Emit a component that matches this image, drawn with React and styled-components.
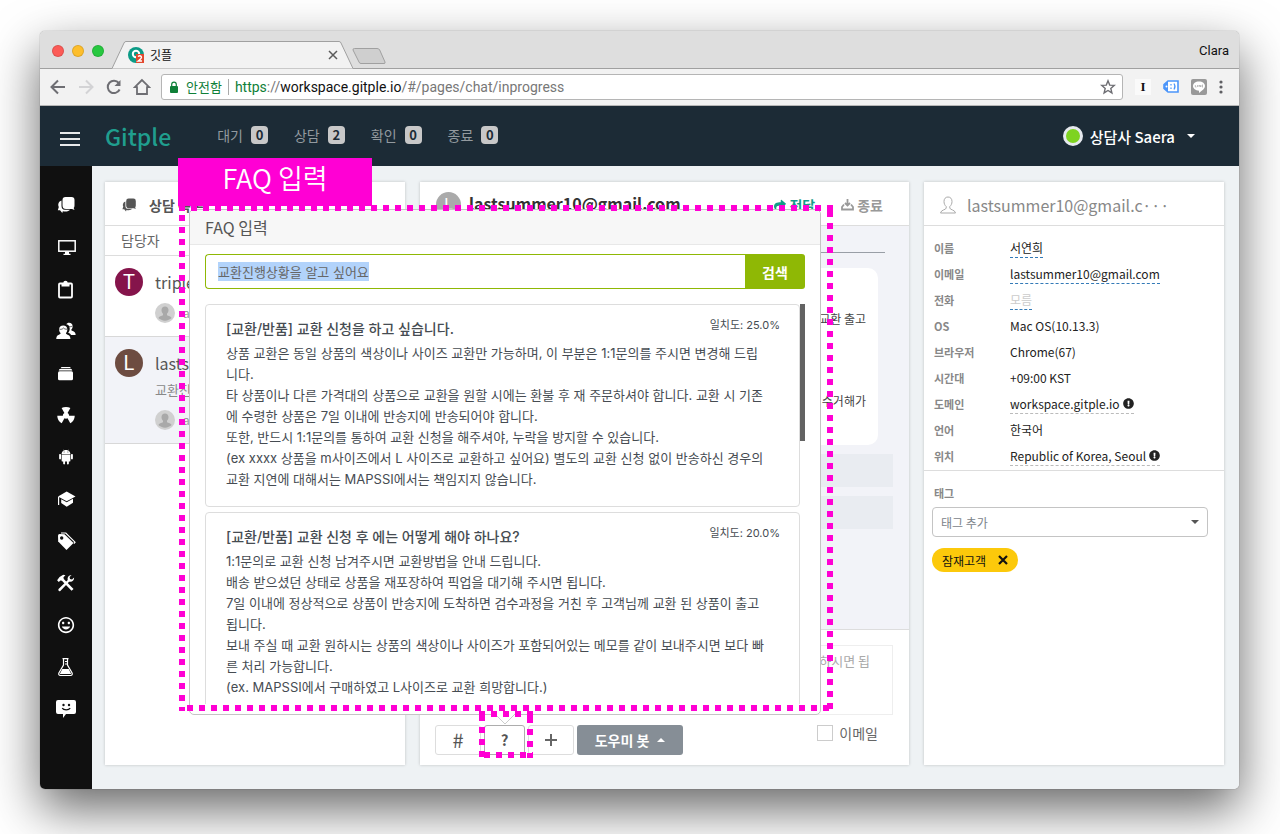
import React, { useEffect, useRef } from 'react';
import styled, { createGlobalStyle } from 'styled-components';
import { IoMdNuclear, IoLogoAndroid, IoMdHappy } from 'react-icons/io';
import { FaExclamationCircle, FaShare } from 'react-icons/fa';

const sidebarItems = [
  { name: '채팅', icon: <ChatIcon /> },
  { name: '모니터', icon: <DesktopIcon /> },
  { name: '기록', icon: <ClipboardIcon /> },
  { name: '고객', icon: <PeopleIcon /> },
  { name: '보관함', icon: <StackIcon /> },
  { name: '캠페인', icon: <IoMdNuclear /> },
  { name: '봇', icon: <IoLogoAndroid /> },
  { name: '학습', icon: <SchoolIcon /> },
  { name: '태그', icon: <TagIcon /> },
  { name: '설정', icon: <ToolsIcon /> },
  { name: '만족도', icon: <IoMdHappy /> },
  { name: '실험실', icon: <FlaskIcon /> },
  { name: '도움말', icon: <SmileChatIcon /> },
];

const statusTabs = [
  { label: '대기', count: 0 },
  { label: '상담', count: 2 },
  { label: '확인', count: 0 },
  { label: '종료', count: 0 },
];

const profile = [
  { label: '이름', value: '서연희', line: '#337ab7' },
  { label: '이메일', value: 'lastsummer10@gmail.com', line: '#337ab7' },
  { label: '전화', value: '모름', line: '#337ab7', empty: true },
  { label: 'OS', value: 'Mac OS(10.13.3)' },
  { label: '브라우저', value: 'Chrome(67)' },
  { label: '시간대', value: '+09:00 KST' },
  { label: '도메인', value: 'workspace.gitple.io', line: '#bbb', info: true },
  { label: '언어', value: '한국어' },
  { label: '위치', value: 'Republic of Korea, Seoul', line: '#bbb', info: true },
];

const faqs = [
  {
    title: '[교환/반품] 교환 신청을 하고 싶습니다.',
    score: '25.0%',
    body: `상품 교환은 동일 상품의 색상이나 사이즈 교환만 가능하며, 이 부분은 1:1문의를 주시면 변경해 드립
니다.
타 상품이나 다른 가격대의 상품으로 교환을 원할 시에는 환불 후 재 주문하셔야 합니다. 교환 시 기존
에 수령한 상품은 7일 이내에 반송지에 반송되어야 합니다.
또한, 반드시 1:1문의를 통하여 교환 신청을 해주셔야, 누락을 방지할 수 있습니다.
(ex xxxx 상품을 m사이즈에서 L 사이즈로 교환하고 싶어요) 별도의 교환 신청 없이 반송하신 경우의
교환 지연에 대해서는 MAPSSI에서는 책임지지 않습니다.`,
  },
  {
    title: '[교환/반품] 교환 신청 후 에는 어떻게 해야 하나요?',
    score: '20.0%',
    body: `1:1문의로 교환 신청 남겨주시면 교환방법을 안내 드립니다.
배송 받으셨던 상태로 상품을 재포장하여 픽업을 대기해 주시면 됩니다.
7일 이내에 정상적으로 상품이 반송지에 도착하면 검수과정을 거친 후 고객님께 교환 된 상품이 출고
됩니다.
보내 주실 때 교환 원하시는 상품의 색상이나 사이즈가 포함되어있는 메모를 같이 보내주시면 보다 빠
른 처리 가능합니다.
(ex. MAPSSI에서 구매하였고 L사이즈로 교환 희망합니다.)`,
  },
];

function ChatIcon() {
  return (
    <svg viewBox="0 0 20 20" fill="currentColor">
      <path d="M9.500 2h6q3 0 3 3v5.500q0 1.500-.8 2.500l.8 2-2.500-1H10q-3.500 0-3.500-3.500V5q0-3 3-3z" />
      <path d="M5.500 5.500C2.500 6.500 1.600 9.500 2.800 12L1.800 15.300H4L6.300 18l.5-1.800c3 .8 6 .3 7.200-1.400H9C6.300 14.800 5.500 13 5.500 10.500z" />
    </svg>
  );
}

function DesktopIcon() {
  return (
    <svg viewBox="0 0 20 20" fill="currentColor">
      <rect x="2.800" y="3.800" width="16.400" height="10.400" fill="none" stroke="currentColor" strokeWidth="1.500" />
      <path d="M9 14.500h4v2.300h1.500V18h-7v-1.200H9z" />
    </svg>
  );
}

function ClipboardIcon() {
  return (
    <svg viewBox="0 0 20 20" fill="currentColor">
      <rect x="3" y="4.500" width="13" height="14" rx="1" fill="none" stroke="currentColor" strokeWidth="1.800" />
      <path d="M5.500 4H7.300a2.200 2.200 0 0 1 4.400 0h1.800v3.500h-8z" />
    </svg>
  );
}

function PeopleIcon() {
  return (
    <svg viewBox="0 0 18 18" fill="currentColor">
      <path d="M11.800 1.600c1.900 0 3.200 1.300 3.200 3.200 0 1.200-.5 2.400-1.300 3 .1.600.5.900 1.300 1.200 1.500.5 2.500 1.200 2.700 3.500h-4.200c-.6-1-1.500-1.500-2.600-1.900 1.400-1.300 1.800-3.600 1.100-5.400C11.500 4 10.500 3.300 9.200 3c.5-.9 1.400-1.400 2.600-1.400z" />
      <path d="M6.500 4.100c2.200 0 3.700 1.400 3.700 3.500 0 1.300-.5 2.500-1.300 3.200.1.800.5 1.100 1.500 1.500 1.700.6 2.400 1.300 2.600 3.900H.2c.2-2.600.9-3.300 2.500-3.900 1-.4 1.400-.7 1.500-1.500-.9-.7-1.400-1.900-1.400-3.200 0-2.100 1.500-3.500 3.700-3.500z" />
      <path d="M3.200 7.400c1.500.3 2.700-.1 3.600-1.100.8.9 1.900 1.200 3.200 1M11.500 4.800c1 .5 2 .4 3.300-.2" fill="none" stroke="#101010" strokeWidth=".6" />
    </svg>
  );
}

function StackIcon() {
  return (
    <svg viewBox="0 0 20 20" fill="currentColor">
      <path d="M5.500 4h8.500l1 1.200H4.500zM3.500 6h12l.8 1.500H2.700z" />
      <rect x="2" y="8.200" width="15" height="9" rx="1.500" />
    </svg>
  );
}

function SchoolIcon() {
  return (
    <svg viewBox="0 0 20 20" fill="currentColor">
      <path d="M10.700 2.500 19.500 7.500 10.700 12.200 2 7.500z" />
      <path d="M5.200 10.200 10.700 13.200 17 9.800v4L10.700 17.800 5.200 14z" />
      <path d="M2 8h1.200v8H2z" />
    </svg>
  );
}

function TagIcon() {
  return (
    <svg viewBox="0 0 20 20" fill="currentColor">
      <path d="M2 4.500Q2 3 3.500 3L8.500 3.200 17.500 12 10.500 19 2.200 10.500z" />
      <path d="M5 2H9.800L19 11.200 17.800 12.500" fill="none" stroke="currentColor" strokeWidth="1.200" />
      <circle cx="5.700" cy="7" r="1.700" fill="#101010" />
    </svg>
  );
}

function ToolsIcon() {
  return (
    <svg viewBox="0 0 18 18" fill="currentColor">
      <path d="M1 6.500 3.200 3.500 6.500 1.500 8.500 2 6.700 3.800 7 5.300 15.800 14.300 14 16 5.300 7 4 6.700 2.500 8.200z" />
      <path d="m2.300 14.500 8.300-8.300c-.5-2.400.8-4.400 3.400-4.500l-1.800 2 .4 1.800 1.800.4 1.900-1.800c.2 2.700-1.900 4.300-4.500 3.700L3.900 16.200c-1 .7-2.300-.6-1.600-1.700z" />
    </svg>
  );
}

function FlaskIcon() {
  return (
    <svg viewBox="0 0 20 20" fill="currentColor">
      <path d="M7.500 2v6L2.900 16q-.8 2.300 1.600 2.500h10q2.400-.2 1.600-2.500L11.500 8V2M6.500 1.700h6" fill="none" stroke="currentColor" strokeWidth="1.200" />
      <path d="M6.300 12h6.400l2.500 5H3.800zM9 4h2v1H9zM9 6.500h2v1H9z" />
    </svg>
  );
}

function SmileChatIcon() {
  return (
    <svg viewBox="0 0 20 20" fill="currentColor">
      <path d="M2 1h16a2 2 0 0 1 2 2v10a2 2 0 0 1-2 2h-8l-3 4v-4H2a2 2 0 0 1-2-2V3a2 2 0 0 1 2-2z" />
      <circle cx="7.500" cy="6" r="1.200" fill="#101010" />
      <circle cx="13" cy="6" r="1.200" fill="#101010" />
      <path d="M6.200 9.200c1.500 2.300 6.500 2.300 8 0" fill="none" stroke="#101010" strokeWidth="1.200" />
    </svg>
  );
}

function PersonIcon() {
  return (
    <svg width="20" height="20" viewBox="0 0 20 20" fill="#d0d0d0">
      <circle cx="10" cy="10" r="10" />
      <path
        d="M10 3.500c2.200 0 3.500 1.500 3.500 3.600 0 1.700-.7 2.900-1.500 3.700v1.500c1.600.7 4 1 4.600 2.800-1.600 1.500-4 2.600-6.600 2.600s-5-1.100-6.600-2.600c.6-1.800 3-2.100 4.600-2.800v-1.500c-.8-.8-1.500-2-1.500-3.700C6.500 5 7.800 3.500 10 3.500z"
        fill="#a9a9a9"
      />
    </svg>
  );
}

function App() {
  const search = useRef(null);

  useEffect(() => {
    search.current.focus();
    search.current.select();
  }, []);

  return (
    <>
      <GlobalStyle />
      <Stage>
        <Window>
          <TabStrip>
            <Light color="#fc5b57" />
            <Light color="#fdbe2c" />
            <Light color="#27c840" />
            <Tab>
              <TabShape viewBox="0 0 242 28">
                <path d="M0 27.500 12 2Q12.600.5 14 .5H227Q228.500.5 229 2L241 27.500" fill="#f2f2f2" stroke="#a0a0a0" />
              </TabShape>
              <svg width="16" height="16" viewBox="0 0 16 16">
                <circle cx="8" cy="8" r="8" fill="#0c9b86" />
                <circle cx="8" cy="7" r="3.200" fill="none" stroke="#fff" strokeWidth="2" />
                <rect x="8" y="7" width="8" height="9" fill="#e2492f" />
                <path d="M10 9.500q2-1.500 3.200 0t-3 4.500h3.800" fill="none" stroke="#fff" strokeWidth="1.400" />
              </svg>
              <TabTitle>깃플</TabTitle>
              <svg width="10" height="10" viewBox="0 0 10 10" stroke="#5a5a5a" strokeWidth="1.500">
                <path d="m1 1 8 8M9 1 1 9" />
              </svg>
            </Tab>
            <NewTab viewBox="0 0 34 17">
              <path d="M2.500.5H25Q27 .5 27.700 2L33 14Q33.500 15.500 32 15.500H9Q7.500 15.500 7 14L1 2Q.7.5 2.500.5z" fill="#cfcfcf" stroke="#a0a0a0" />
            </NewTab>
            <ChromeUser>Clara</ChromeUser>
          </TabStrip>
          <Toolbar>
            <ChromeButton aria-label="뒤로">
              <svg width="16" height="16" viewBox="0 0 16 16" fill="none" stroke="#6e6e73" strokeWidth="2">
                <path d="M15 8H2M8 1.500 1.500 8 8 14.500" />
              </svg>
            </ChromeButton>
            <ChromeButton aria-label="앞으로">
              <svg width="16" height="16" viewBox="0 0 16 16" fill="none" stroke="#d3d3d5" strokeWidth="2">
                <path d="M1 8h13M8 1.500 14.500 8 8 14.500" />
              </svg>
            </ChromeButton>
            <ChromeButton aria-label="새로고침">
              <svg width="16" height="16" viewBox="0 0 16 16" fill="none" stroke="#6e6e73" strokeWidth="2">
                <path d="M13.600 10.500A6.200 6.200 0 1 1 12.800 4" />
                <path d="M14.500 1v6h-6z" fill="#6e6e73" stroke="none" />
              </svg>
            </ChromeButton>
            <ChromeButton aria-label="홈">
              <svg width="18" height="18" viewBox="0 0 18 18" fill="none" stroke="#6e6e73" strokeWidth="1.800">
                <path d="M9 2 1.800 9.200H4V16h10V9.200h2.200z" />
              </svg>
            </ChromeButton>
            <UrlBox>
              <svg width="8" height="12" viewBox="0 0 8 12" fill="#0f8038">
                <rect y="5" width="8" height="7" rx="1" />
                <path d="M1.700 5V3.500a2.300 2.300 0 0 1 4.600 0V5" fill="none" stroke="#0f8038" strokeWidth="1.200" />
              </svg>
              <Secure>안전함</Secure>
              <Url>
                <Green>https</Green>://<Black>workspace.gitple.io</Black>/#/pages/chat/inprogress
              </Url>
              <svg width="16" height="16" viewBox="0 0 16 16" fill="none" stroke="#6e6e73" strokeWidth="1.400">
                <path d="m8 1.800 1.700 4.300 4.600.3-3.500 3 1.100 4.500L8 11.500l-3.900 2.400 1.100-4.500-3.500-3 4.600-.3z" />
              </svg>
            </UrlBox>
            <Extensions>
              <ExtLetter>I</ExtLetter>
              <svg width="16" height="14" viewBox="0 0 16 14">
                <path d="M5 1h10v11H5L1 8.500v-4z" fill="#fff" stroke="#4b95fa" strokeWidth="1.600" />
                <path d="M1 4.500 5 1v11L1 8.500z" fill="#4b95fa" />
                <path d="M8 4v1.500M8 7.500V9M11 3.500q2 3 0 6" fill="none" stroke="#4b95fa" strokeWidth="1.200" />
                <circle cx="3.500" cy="6.500" r="1" fill="#fff" />
              </svg>
              <svg width="16" height="16" viewBox="0 0 16 16">
                <rect width="16" height="16" rx="2" fill="#999" />
                <path d="M8 2.500c3.500 0 6 2 6 4.600 0 2.300-2.500 4.400-6 6.900v-2.300c-3.500 0-6-2-6-4.600s2.500-4.600 6-4.600z" fill="#fff" />
                <path d="M4.300 6v2h1.200M6.500 6v2M8 8V6l1.500 2V6M12 6h-1v2h1M11 7h1" fill="none" stroke="#999" strokeWidth=".6" />
              </svg>
              <svg width="4" height="14" viewBox="0 0 4 14" fill="#5f5f63">
                <circle cx="2" cy="2" r="1.600" />
                <circle cx="2" cy="7" r="1.600" />
                <circle cx="2" cy="12" r="1.600" />
              </svg>
            </Extensions>
          </Toolbar>

          <AppHeader>
            <MenuButton aria-label="메뉴">
              <svg width="20" height="16" viewBox="0 0 20 16" stroke="#e8eaeb" strokeWidth="2">
                <path d="M0 2h20M0 8h20M0 14h20" />
              </svg>
            </MenuButton>
            <Brand href="#/">Gitple</Brand>
            <StatusNav>
              {statusTabs.map((tab) => (
                <StatusLink href="#/pages/chat" key={tab.label}>
                  {tab.label}
                  <Count>{tab.count}</Count>
                </StatusLink>
              ))}
            </StatusNav>
            <UserMenu>
              <Online />
              상담사 Saera
              <Caret />
            </UserMenu>
          </AppHeader>

          <Body>
            <Sidebar>
              {sidebarItems.map((item) => (
                <SideLink href="#/pages" aria-label={item.name} key={item.name}>
                  {item.icon}
                </SideLink>
              ))}
            </Sidebar>

            <Content>
              <Panel>
                <PanelHeader>
                  <ListTitle>
                    <ChatIcon />
                    상담 목록
                  </ListTitle>
                </PanelHeader>
                <ListFilter>담당자</ListFilter>
                <Chat>
                  <Avatar color="#85144b">T</Avatar>
                  <ChatInfo>
                    <ChatName>triple</ChatName>
                    <Agent>
                      <PersonIcon />
                      ag
                    </Agent>
                  </ChatInfo>
                </Chat>
                <Chat $active>
                  <Avatar color="#6d4c41">L</Avatar>
                  <ChatInfo>
                    <ChatName>lastsu</ChatName>
                    <ChatText>교환진</ChatText>
                    <Agent>
                      <PersonIcon />
                      ag
                    </Agent>
                  </ChatInfo>
                </Chat>
              </Panel>

              <Panel>
                <PanelHeader>
                  <RoomAvatar>L</RoomAvatar>
                  <RoomTitle>lastsummer10@gmail.com</RoomTitle>
                  <RoomAction $accent>
                    <FaShare size={12} />
                    전달
                  </RoomAction>
                  <RoomAction>
                    <svg width="13" height="13" viewBox="0 0 13 13" fill="none" stroke="currentColor" strokeWidth="1.800">
                      <path d="M3 6.500 1 9v2.500h11V9l-2-2.500M6.500 1v6M4 5l2.500 2.500L9 5" />
                    </svg>
                    종료
                  </RoomAction>
                </PanelHeader>
                <Messages>
                  <Divider />
                  <Bubble>
                    <p>교환 출고</p>
                    <p>수거해가</p>
                  </Bubble>
                  <SystemRow />
                  <SystemRow />
                </Messages>
                <Composer>
                  <MessageBox aria-label="메시지" placeholder="하시면 됩" />
                  <Actions>
                    <ToolButton $wide>#</ToolButton>
                    <ToolButton $active>?</ToolButton>
                    <ToolButton $wide aria-label="추가">
                      <svg width="12" height="12" viewBox="0 0 12 12" stroke="#666" strokeWidth="2">
                        <path d="M6 0v12M0 6h12" />
                      </svg>
                    </ToolButton>
                    <BotButton>
                      도우미 봇
                      <Caret $up />
                    </BotButton>
                    <EmailCheck>
                      <input type="checkbox" />
                      이메일
                    </EmailCheck>
                  </Actions>
                </Composer>
              </Panel>

              <Panel>
                <PanelHeader>
                  <ProfileTitle>
                    <svg width="16" height="18" viewBox="0 0 16 18" fill="none" stroke="#aaa">
                      <path d="M8 1c2.500 0 4 1.800 4 4.500 0 2.200-.9 4-2.200 5v1.500c0 2 5.200 1.500 5.700 5H.5c.5-3.500 5.700-3 5.700-5v-1.500C4.900 9.500 4 7.700 4 5.500 4 2.800 5.500 1 8 1z" />
                    </svg>
                    lastsummer10@gmail.c···
                  </ProfileTitle>
                </PanelHeader>
                <Profile>
                  {profile.map((row) => (
                    <ProfileRow key={row.label}>
                      <dt>{row.label}</dt>
                      <dd>
                        <Value $line={row.line} $empty={row.empty}>
                          {row.value}
                          {row.info && <FaExclamationCircle size={11} />}
                        </Value>
                      </dd>
                    </ProfileRow>
                  ))}
                </Profile>
                <Tags>
                  <label htmlFor="tag">태그</label>
                  <SelectBox>
                    <select id="tag">
                      <option>태그 추가</option>
                    </select>
                    <Caret />
                  </SelectBox>
                  <Tag>
                    잠재고객
                    <button aria-label="태그 삭제">
                      <svg width="10" height="10" viewBox="0 0 10 10" stroke="#111" strokeWidth="2.200">
                        <path d="m1 1 8 8M9 1 1 9" />
                      </svg>
                    </button>
                  </Tag>
                </Tags>
              </Panel>
            </Content>

            <Popover>
              <PopoverTitle>FAQ 입력</PopoverTitle>
              <SearchRow>
                <SearchInput ref={search} aria-label="FAQ 검색" defaultValue="교환진행상황을 알고 싶어요" />
                <SearchButton>검색</SearchButton>
              </SearchRow>
              <Results>
                <ResultList>
                  {faqs.map((faq) => (
                    <Faq key={faq.title}>
                      <FaqHead>
                        <h3>{faq.title}</h3>
                        <span>일치도: {faq.score}</span>
                      </FaqHead>
                      <p>{faq.body}</p>
                    </Faq>
                  ))}
                </ResultList>
                <Scrollbar />
              </Results>
              <Arrow viewBox="0 0 20 11">
                <path d="M0 0 10 10 20 0" fill="#fff" stroke="#ccc" />
              </Arrow>
            </Popover>
            <PopoverMark />
            <ButtonMark />
            <MarkLabel>FAQ 입력</MarkLabel>
          </Body>
        </Window>
      </Stage>
    </>
  );
}

export default App;

// Styled Components
const GlobalStyle = createGlobalStyle`
  * {
    box-sizing: border-box;
  }

  body {
    margin: 0;
    background-color: #fff;
    font-family: 'Noto Sans CJK KR', sans-serif;
    color: #333;
  }

  button, input, select, textarea {
    font-family: inherit;
  }

  p, h2, h3, dl, dd {
    margin: 0;
  }

  a {
    text-decoration: none;
  }
`;

const Stage = styled.div`
  display: flex;
  min-height: 100vh;
  padding: 31px 41px 45px 40px;
  overflow: hidden;
`;

const Window = styled.div`
  flex: 1;
  display: flex;
  flex-direction: column;
  min-width: 0;
  border-radius: 5px;
  box-shadow: 0 0 1px rgba(0, 0, 0, 0.6), 0 20px 50px rgba(0, 0, 0, 0.6);
`;

const TabStrip = styled.div`
  display: flex;
  align-items: center;
  gap: 8px;
  height: 38px;
  padding: 2px 10px 0 12px;
  background-color: #dedede;
  border-bottom: 1px solid #a0a0a0;
  border-radius: 5px 5px 0 0;
`;

const Light = styled.span`
  width: 12px;
  height: 12px;
  border-radius: 50%;
  border: 1px solid rgba(0, 0, 0, 0.12);
  background-color: ${(props) => props.color};
`;

const Tab = styled.div`
  position: relative;
  display: flex;
  align-items: center;
  align-self: flex-end;
  gap: 6px;
  width: 242px;
  height: 28px;
  padding: 0 16px;
  margin: 0 -10px -1px 0;
`;

const TabShape = styled.svg`
  position: absolute;
  inset: 0;
  z-index: 0;
  & ~ * {
    position: relative;
  }
`;

const TabTitle = styled.span`
  flex: 1;
  font-size: 12px;
  line-height: 16px;
  color: #111;
`;

const NewTab = styled.svg`
  width: 34px;
  height: 17px;
  margin-top: 11px;
`;

const ChromeUser = styled.span`
  margin-left: auto;
  font: 13px Roboto, sans-serif;
  color: #111;
`;

const Toolbar = styled.div`
  display: flex;
  align-items: center;
  height: 37px;
  padding: 0 16px 0 4px;
  background-color: #f2f2f2;
  border-bottom: 1px solid #b6b6b6;
`;

const ChromeButton = styled.button`
  display: flex;
  justify-content: center;
  align-items: center;
  width: 28px;
  padding: 0;
  border: none;
  background: none;
`;

const UrlBox = styled.div`
  flex: 1;
  display: flex;
  align-items: center;
  height: 26px;
  margin-left: 5px;
  padding: 0 6px 0 8px;
  border: 1px solid #b5b5b5;
  border-radius: 3px;
  background-color: #fff;
`;

const Secure = styled.span`
  margin: 0 6px 0 8px;
  padding-right: 6px;
  border-right: 1px solid #aaa;
  font-size: 13px;
  line-height: 16px;
  color: #0f8038;
`;

const Url = styled.span`
  flex: 1;
  font: 14px Roboto, sans-serif;
  color: #777;
`;

const Green = styled.span`
  color: #0f8038;
`;

const Black = styled.span`
  color: #111;
`;

const Extensions = styled.div`
  display: flex;
  align-items: center;
  gap: 12px;
  padding-left: 12px;
`;

const ExtLetter = styled.span`
  width: 16px;
  height: 16px;
  background-color: #fafafa;
  font: bold 13px/16px 'Liberation Serif', serif;
  text-align: center;
  color: #111;
`;

const AppHeader = styled.header`
  display: flex;
  align-items: center;
  height: 60px;
  padding: 0 44px 0 20px;
  background-color: #1c2b36;
`;

const MenuButton = styled.button`
  display: flex;
  margin-top: 6px;
  padding: 0;
  border: none;
  background: none;
`;

const Brand = styled.a`
  margin-left: 25px;
  font-size: 23px;
  font-weight: 500;
  line-height: 32px;
  color: #209e8e;
`;

const StatusNav = styled.nav`
  display: flex;
  gap: 26px;
  margin: 0 0 3px 46px;
`;

const StatusLink = styled.a`
  display: flex;
  align-items: center;
  gap: 8px;
  font-size: 14px;
  line-height: 18px;
  color: #939a9f;
`;

const Count = styled.span`
  width: 17px;
  height: 18px;
  border-radius: 4px;
  background-color: #c8c8c8;
  font-size: 13px;
  font-weight: 700;
  text-align: center;
  color: #1c2b36;
`;

const UserMenu = styled.button`
  display: flex;
  align-items: center;
  gap: 7px;
  margin-left: auto;
  padding: 0;
  border: none;
  background: none;
  font-size: 15px;
  font-weight: 500;
  color: #fff;
`;

const Online = styled.span`
  width: 20px;
  height: 20px;
  border: 3px solid #e6e9ee;
  border-radius: 50%;
  background-color: #7ed321;
`;

const Caret = styled.span`
  width: 0;
  margin-left: ${(props) => (props.$up ? '0' : '5px')};
  border: 4px solid transparent;
  ${(props) => (props.$up ? 'border-top-width: 0; border-bottom-color: currentColor;' : 'border-bottom-width: 0; border-top-color: currentColor;')}
`;

const Body = styled.div`
  position: relative;
  flex: 1;
  display: flex;
`;

const Sidebar = styled.nav`
  width: 52px;
  padding-top: 18px;
  background-color: #101010;
  border-radius: 0 0 0 5px;
`;

const SideLink = styled.a`
  display: flex;
  align-items: center;
  justify-content: center;
  height: 42px;
  color: #fff;
  svg {
    width: 20px;
    height: 20px;
  }
`;

const Content = styled.main`
  flex: 1;
  display: grid;
  grid-template-columns: 300px 1fr 300px;
  gap: 15px;
  padding: 16px 15px 24px 13px;
  background-color: #eef2f4;
  border-radius: 0 0 5px 0;
`;

const Panel = styled.section`
  display: flex;
  flex-direction: column;
  min-width: 0;
  background-color: #fff;
  box-shadow: 0 0 3px rgba(0, 0, 0, 0.2);
`;

const PanelHeader = styled.div`
  display: flex;
  align-items: center;
  height: 44px;
  padding: 2px 16px 0;
  border-bottom: 1px solid #ddd;
`;

const ListTitle = styled.h2`
  display: flex;
  align-items: center;
  gap: 12px;
  font-size: 14px;
  font-weight: 700;
  color: #555;
  svg {
    width: 16px;
    height: 16px;
  }
`;

const ListFilter = styled.div`
  height: 30px;
  padding-left: 16px;
  border-bottom: 1px solid #ddd;
  font-size: 14px;
  line-height: 29px;
  color: #666;
`;

const Chat = styled.div`
  display: flex;
  gap: 12px;
  padding: 12px 10px 13px;
  border-bottom: 1px solid #d8d8d8;
  background-color: ${(props) => (props.$active ? '#f2f3f8' : '#fff')};
`;

const Avatar = styled.span`
  width: 28px;
  height: 28px;
  border-radius: 50%;
  background-color: ${(props) => props.color};
  font: 20px/28px Roboto, sans-serif;
  text-align: center;
  color: #fff;
`;

const ChatInfo = styled.div`
  flex: 1;
`;

const ChatName = styled.p`
  font-size: 16px;
  line-height: 28px;
  color: #555;
`;

const ChatText = styled.p`
  font-size: 13px;
  line-height: 26px;
  color: #888;
`;

const Agent = styled.p`
  display: flex;
  align-items: center;
  gap: 8px;
  margin-top: 7px;
  font-size: 12px;
  line-height: 20px;
  color: #999;
`;

const RoomAvatar = styled(Avatar)`
  width: 25px;
  height: 25px;
  background-color: #aaa;
  font-size: 16px;
  line-height: 25px;
`;

const RoomTitle = styled.h2`
  flex: 1;
  margin: 0 0 4px 8px;
  font-size: 16px;
  font-weight: 700;
`;

const RoomAction = styled.button`
  display: flex;
  align-items: center;
  gap: 3px;
  margin: 0 10px 0 16px;
  padding: 0;
  border: none;
  background: none;
  font-size: 14px;
  font-weight: 700;
  color: ${(props) => (props.$accent ? '#139d87' : '#999')};
`;

const Messages = styled.div`
  display: flex;
  flex-direction: column;
  height: 404px;
  padding: 26px 16px 0;
  background-color: #f2f3f8;
  border-bottom: 1px solid #ddd;
`;

const Divider = styled.hr`
  align-self: stretch;
  margin: 0 8px 0 0;
  border: none;
  border-top: 1px solid #999ea6;
`;

const Bubble = styled.div`
  display: flex;
  flex-direction: column;
  gap: 62px;
  height: 177px;
  margin: 15px 15px 9px 0;
  padding: 41px 12px 0;
  border-radius: 10px;
  background-color: #fff;
  font-size: 12px;
  line-height: 20px;
  text-align: right;
  color: #444;
`;

const SystemRow = styled.div`
  height: 33px;
  margin-bottom: 9px;
  background-color: #e9ecf1;
`;

const Composer = styled.div`
  padding: 15px 16px 0 15px;
`;

const MessageBox = styled.textarea`
  display: block;
  width: 100%;
  height: 70px;
  padding: 6px 22px;
  border: 1px solid #eee;
  background-color: #fff;
  font-size: 13px;
  line-height: 18px;
  text-align: right;
  resize: none;
  &::placeholder {
    color: #aaa;
  }
`;

const Actions = styled.div`
  display: flex;
  gap: 3px;
  margin-top: 10px;
`;

const ToolButton = styled.button`
  display: flex;
  align-items: center;
  justify-content: center;
  width: ${(props) => (props.$wide ? '46px' : '41px')};
  height: 30px;
  padding: 0;
  border: 1px solid ${(props) => (props.$active ? '#adadad' : '#ddd')};
  border-radius: 3px;
  background-color: #fff;
  font-size: ${(props) => (props.$active ? '15px' : '20px')};
  font-weight: ${(props) => (props.$active ? '700' : '400')};
  line-height: 28px;
  color: #555;
`;

const BotButton = styled.button`
  display: flex;
  align-items: center;
  justify-content: center;
  gap: 8px;
  width: 106px;
  height: 30px;
  padding: 0;
  border: none;
  border-radius: 3px;
  background-color: #868e96;
  font-size: 14px;
  font-weight: 700;
  color: #fff;
`;

const EmailCheck = styled.label`
  display: flex;
  align-items: center;
  gap: 6px;
  height: 16px;
  margin: 0 15px 0 auto;
  font-size: 14px;
  color: #666;
  input {
    appearance: none;
    width: 16px;
    height: 16px;
    margin: 0;
    border: 1px solid #ccc;
    background-color: #fff;
  }
`;

const ProfileTitle = styled.h2`
  display: flex;
  align-items: center;
  gap: 11px;
  font-size: 16px;
  font-weight: 400;
  color: #888;
`;

const Profile = styled.dl`
  height: 245px;
  padding: 9px 10px 0;
  border-bottom: 1px solid #ddd;
`;

const ProfileRow = styled.div`
  display: flex;
  align-items: center;
  height: 26px;
  font-size: 12px;
  line-height: 18px;
  dt {
    width: 76px;
    font-size: 11px;
    font-weight: 700;
    color: #888;
  }
`;

const Value = styled.span`
  display: inline-flex;
  align-items: center;
  gap: 3px;
  border-bottom: 1px dashed ${(props) => props.$line || 'transparent'};
  color: ${(props) => (props.$empty ? '#ccc' : '#222')};
`;

const Tags = styled.div`
  padding: 14px 16px 0 8px;
  label {
    display: block;
    padding-left: 2px;
    font-size: 11px;
    font-weight: 700;
    line-height: 16px;
    color: #888;
  }
`;

const SelectBox = styled.div`
  display: flex;
  align-items: center;
  height: 30px;
  margin: 6px 0 11px;
  padding: 0 8px;
  border: 1px solid #c4c4c4;
  border-radius: 4px;
  color: #555;
  select {
    flex: 1;
    appearance: none;
    padding: 0;
    border: none;
    background: none;
    font-size: 12px;
    color: #7b838a;
  }
`;

const Tag = styled.span`
  display: flex;
  align-items: center;
  gap: 12px;
  width: fit-content;
  height: 24px;
  padding: 0 10px;
  border-radius: 12px;
  background-color: #fcc90b;
  font-size: 12px;
  color: #111;
  button {
    display: flex;
    padding: 0;
    border: none;
    background: none;
  }
`;

const Popover = styled.div`
  position: absolute;
  top: 43px;
  left: 149px;
  width: 632px;
  height: 506px;
  border: 1px solid #c4c4c4;
  border-radius: 5px;
  background-color: #fff;
  font-family: Inter, 'Noto Sans CJK KR', sans-serif;
`;

const PopoverTitle = styled.h2`
  height: 35px;
  padding-left: 15px;
  border-bottom: 1px solid #e8e8e8;
  border-radius: 5px 5px 0 0;
  background-color: #f7f7f7;
  font: 400 16px/34px 'Noto Sans CJK KR', sans-serif;
  color: #555;
`;

const SearchRow = styled.div`
  display: flex;
  height: 35px;
  margin: 9px 15px 15px;
`;

const SearchInput = styled.input`
  flex: 1;
  padding: 0 12px;
  border: 1px solid #8fb805;
  border-right: none;
  border-radius: 4px 0 0 4px;
  outline: none;
  font-size: 13px;
  color: #666;
  &::selection {
    background-color: #b2d3fb;
    color: #666;
  }
`;

const SearchButton = styled.button`
  width: 60px;
  padding: 0;
  border: none;
  border-radius: 0 3px 3px 0;
  background-color: #8fb805;
  font-size: 14px;
  font-weight: 700;
  color: #fff;
`;

const Results = styled.div`
  display: flex;
  height: 400px;
  margin: 0 15px;
  overflow: hidden;
`;

const ResultList = styled.div`
  flex: 1;
`;

const Scrollbar = styled.span`
  width: 5px;
  height: 137px;
  background-color: #636363;
`;

const Faq = styled.article`
  height: 203px;
  margin-bottom: 5px;
  padding: 13px 19px 0 20px;
  border: 1px solid #ddd;
  border-radius: 4px;
  color: #464c52;
  p {
    font-size: 13px;
    line-height: 21px;
    white-space: pre;
  }
`;

const FaqHead = styled.div`
  display: flex;
  justify-content: space-between;
  height: 25px;
  h3 {
    font-size: 14px;
    font-weight: 500;
    line-height: 21px;
  }
  span {
    font-size: 11px;
    line-height: 14px;
  }
`;

const Arrow = styled.svg`
  position: absolute;
  top: 504px;
  left: 305px;
  width: 20px;
  height: 11px;
`;

// dotted marker frame, one gradient for each edge: top, right, bottom, left
const Mark = styled.div`
  position: absolute;
  pointer-events: none;
  background-image: repeating-linear-gradient(to right, #ff00d4 0 6px, transparent 6px 12px),
    repeating-linear-gradient(to bottom, #ff00d4 0 6px, transparent 6px 12px),
    repeating-linear-gradient(to right, #ff00d4 0 6px, transparent 6px 12px),
    repeating-linear-gradient(to bottom, #ff00d4 0 6px, transparent 6px 12px);
  background-position: 0 0, 100% 6px, 100% 100%, 0 100%;
  background-repeat: no-repeat;
`;

const PopoverMark = styled(Mark)`
  top: 39px;
  left: 139px;
  width: 654px;
  height: 506px;
  background-size: 100% 6px, 6px 500px, 646px 6px, 6px 496px;
`;

const ButtonMark = styled(Mark)`
  top: 545px;
  left: 439px;
  width: 54px;
  height: 47px;
  background-size: 100% 6px, 6px 41px, 49px 6px, 6px 43px;
`;

const MarkLabel = styled.span`
  position: absolute;
  top: -8px;
  left: 138px;
  width: 194px;
  height: 48px;
  background-color: #ff00d4;
  font-size: 27px;
  font-weight: 350;
  line-height: 40px;
  text-align: center;
  color: #fff;
`;
